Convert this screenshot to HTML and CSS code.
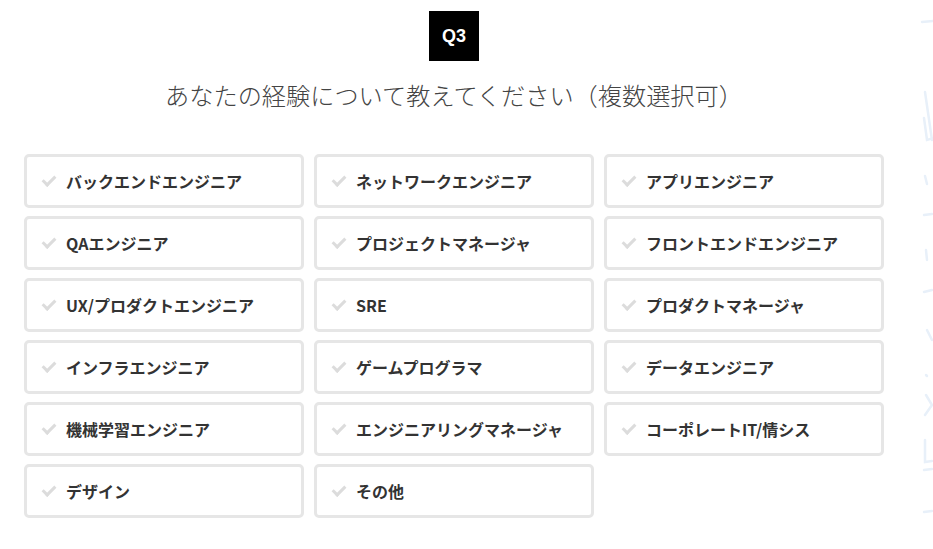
FILE: index.html
```html
<!DOCTYPE html>
<html lang="ja">
<head>
<meta charset="utf-8">
<title>Q3</title>
<link rel="stylesheet" href="styles.css">
</head>
<body>
<div class="page">
  <main class="question">
    <div class="badge">Q3</div>
    <h1 class="title">あなたの経験について教えてください（複数選択可）</h1>
    <ul class="options">
      <li class="option"><span class="check"></span><span class="label">バックエンドエンジニア</span></li>
      <li class="option"><span class="check"></span><span class="label">ネットワークエンジニア</span></li>
      <li class="option"><span class="check"></span><span class="label">アプリエンジニア</span></li>
      <li class="option"><span class="check"></span><span class="label">QAエンジニア</span></li>
      <li class="option"><span class="check"></span><span class="label">プロジェクトマネージャ</span></li>
      <li class="option"><span class="check"></span><span class="label">フロントエンドエンジニア</span></li>
      <li class="option"><span class="check"></span><span class="label">UX/プロダクトエンジニア</span></li>
      <li class="option"><span class="check"></span><span class="label">SRE</span></li>
      <li class="option"><span class="check"></span><span class="label">プロダクトマネージャ</span></li>
      <li class="option"><span class="check"></span><span class="label">インフラエンジニア</span></li>
      <li class="option"><span class="check"></span><span class="label">ゲームプログラマ</span></li>
      <li class="option"><span class="check"></span><span class="label">データエンジニア</span></li>
      <li class="option"><span class="check"></span><span class="label">機械学習エンジニア</span></li>
      <li class="option"><span class="check"></span><span class="label">エンジニアリングマネージャ</span></li>
      <li class="option"><span class="check"></span><span class="label">コーポレートIT/情シス</span></li>
      <li class="option"><span class="check"></span><span class="label">デザイン</span></li>
      <li class="option"><span class="check"></span><span class="label">その他</span></li>
    </ul>
  </main>
  <svg class="deco" width="30" height="549" viewBox="0 0 30 549" aria-hidden="true">
    <g stroke="#e8f0f9" stroke-width="2.5" fill="none" stroke-linecap="round" transform="translate(7 0)">
      <path d="M12 22 L24 21"/>
      <path d="M15 92 L22 140"/>
      <path d="M14 118 L17 140 L24 138"/>
      <path d="M15 176 L17 184"/>
      <path d="M14 215 L22 214"/>
      <path d="M16 250 L17 260"/>
      <path d="M14 292 L22 290"/>
      <path d="M17 330 L22 340"/>
      <path d="M16 375 L17 376"/>
      <path d="M16 395 L22 405 L15 415"/>
      <path d="M15 440 L15 462 L22 461"/>
      <path d="M14 470 L22 469"/>
      <path d="M14 512 L22 511"/>
    </g>
  </svg>
</div>
</body>
</html>
```

FILE: styles.css
```css
html, body {
  margin: 0;
  padding: 0;
  background: #ffffff;
}

.page {
  position: relative;
  width: 933px;
  height: 549px;
  overflow: hidden;
  font-family: "Noto Sans CJK JP", "Noto Sans", sans-serif;
}

.question {
  width: 860px;
  margin-left: 24px;
  padding-top: 11px;
  display: flex;
  flex-direction: column;
  align-items: center;
}

.badge {
  width: 50px;
  height: 50px;
  background: #000;
  color: #fff;
  font-family: "Liberation Sans", Arial, sans-serif;
  font-weight: 700;
  font-size: 18px;
  display: flex;
  align-items: center;
  justify-content: center;
}

.title {
  margin: 17px 0 0;
  font-size: 24.2px;
  line-height: 34px;
  font-weight: 300;
  color: #444;
  letter-spacing: 0;
}

.options {
  list-style: none;
  margin: 42px 0 0;
  padding: 0;
  width: 860px;
  display: grid;
  grid-template-columns: repeat(3, 280px);
  column-gap: 10px;
  row-gap: 8px;
}

.option {
  box-sizing: border-box;
  height: 54px;
  border: 3px solid #e6e6e6;
  border-radius: 5px;
  display: flex;
  align-items: center;
  padding-left: 15px;
}

.check {
  width: 13px;
  height: 10px;
  margin-right: 11px;
  position: relative;
  flex: none;
}

.check::before {
  content: "";
  position: absolute;
  left: 3px;
  top: -3px;
  width: 5px;
  height: 10px;
  border-right: 3px solid #dcdcdc;
  border-bottom: 3px solid #dcdcdc;
  transform: rotate(45deg);
}

.label {
  font-size: 16px;
  font-weight: 700;
  color: #333;
}

.deco {
  position: absolute;
  right: 0;
  top: 0;
}
```
